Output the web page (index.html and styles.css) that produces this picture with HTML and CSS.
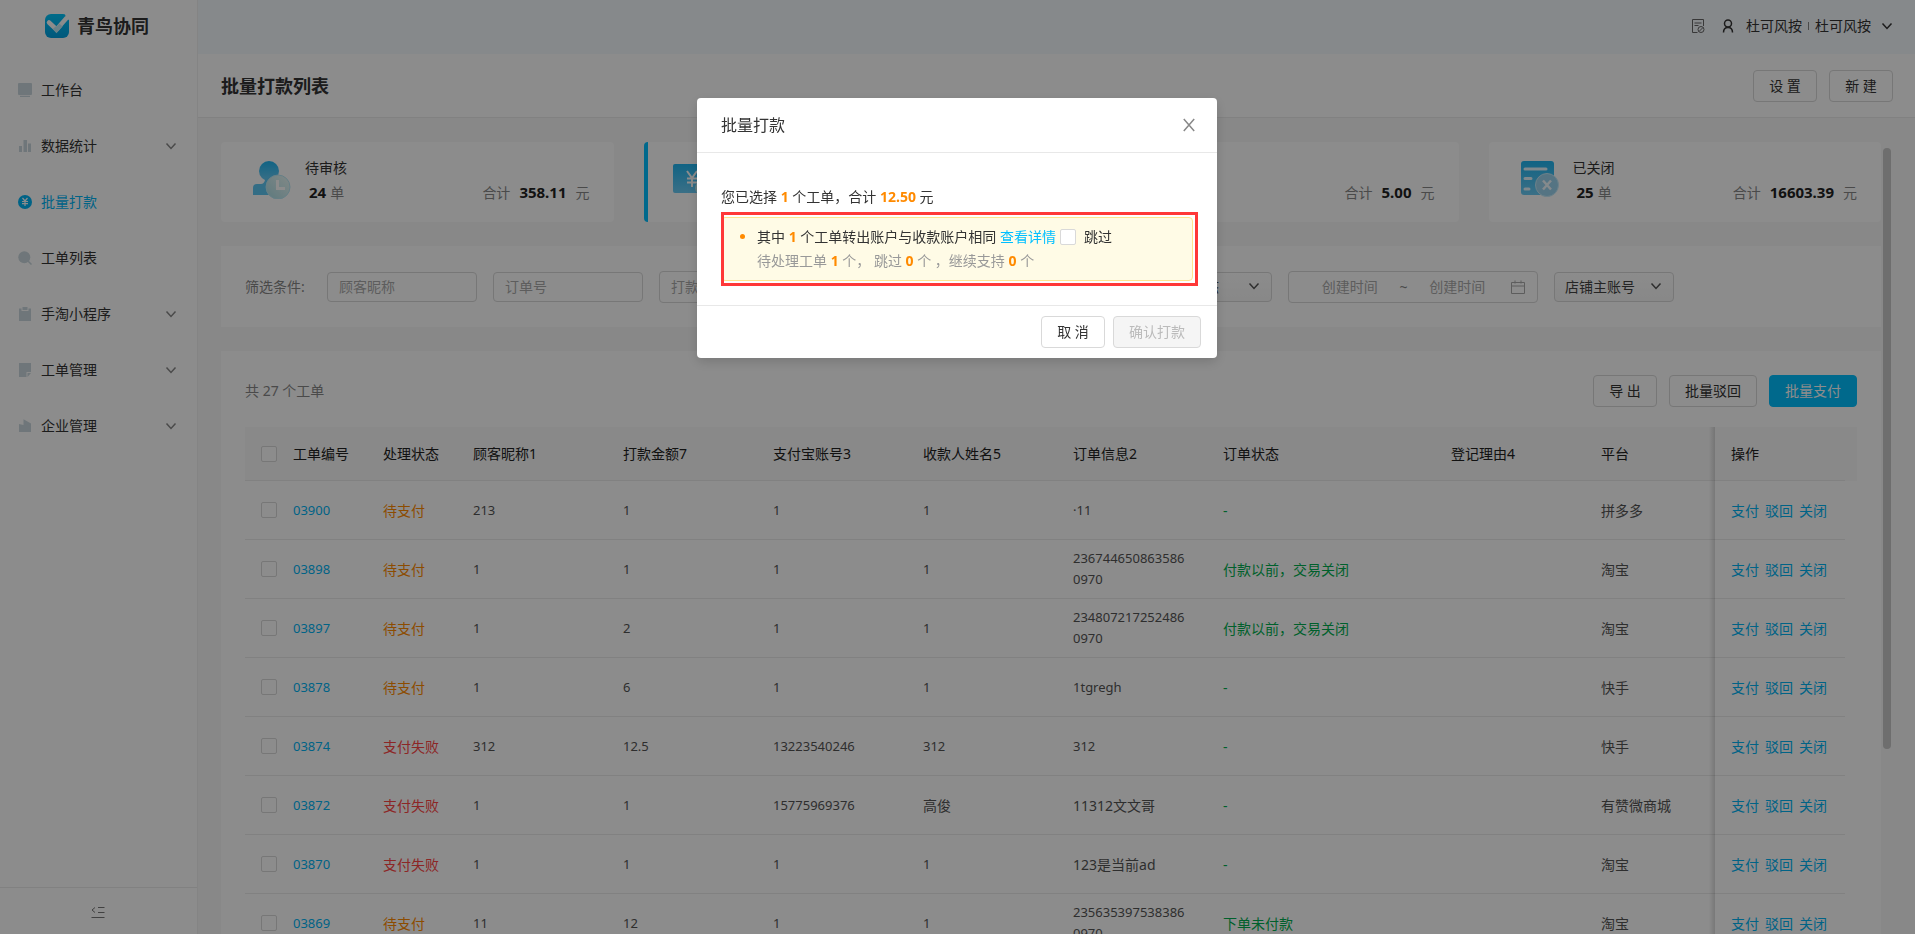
FILE: index.html
```html
<!DOCTYPE html>
<html lang="zh-CN">
<head>
<meta charset="utf-8">
<title>批量打款列表</title>
<link rel="stylesheet" href="styles.css">
</head>
<body>
<svg class="defs" aria-hidden="true">
  <defs>
    <linearGradient id="blue" x1="0" y1="0" x2="0" y2="1"><stop offset="0" stop-color="#1fb5f0"/><stop offset="1" stop-color="#6bcbf5"/></linearGradient>
    <linearGradient id="pale" x1="1" y1="0" x2="0" y2="1"><stop offset="0" stop-color="#eefaf6"/><stop offset="1" stop-color="#aadde6"/></linearGradient>
    <linearGradient id="brand" x1="0" y1="0" x2="0" y2="1"><stop offset="0" stop-color="#00c4fa"/><stop offset="1" stop-color="#00a0e0"/></linearGradient>
    <symbol id="chev" viewBox="0 0 12 12"><path d="M1.500 3.500 6 8.500l4.500-5" fill="none" stroke="currentColor" stroke-width="1.500"/></symbol>
  </defs>
</svg>
<div class="app">
  <aside class="sidebar">
    <div class="logo">
      <svg width="24" height="24" viewBox="0 0 24 24"><rect width="24" height="24" rx="6" fill="url(#brand)"/><path d="M20 0h4v6l-3-2z" fill="#fff"/><path d="M4 8.500 11.500 15.500" fill="none" stroke="#fff" stroke-width="4.500" stroke-linecap="round"/><path d="M11.500 15.500 22 3.500" fill="none" stroke="#fff" stroke-width="4.500"/><path d="M9.500 13.500 11.500 15.800 16 11" fill="none" stroke="#c2ecf7" stroke-width="4.500"/></svg>
      <span>青鸟协同</span>
    </div>
    <nav class="menu">
      <a href="#"><svg class="mi" viewBox="0 0 14 14"><path d="M1 0h12a1 1 0 0 1 1 1v10a1 1 0 0 1-1 1H1a1 1 0 0 1-1-1V1a1 1 0 0 1 1-1zM2 12.800h10V14H2z"/></svg><span>工作台</span></a>
      <a href="#"><svg class="mi" viewBox="0 0 14 14"><path d="M1 7h3v6H1zM5.500 1h3.500v12H5.500zM10 4.500h3V13h-3z"/></svg><span>数据统计</span><svg class="chev"><use href="#chev"/></svg></a>
      <a href="#" class="on"><svg class="mi" viewBox="0 0 14 14"><circle cx="7" cy="7" r="7"/><path d="M4.500 3 7 6l2.500-3M7 6v5M4 6.500h6M4 8.700h6" fill="none" stroke="#fff" stroke-width="1.200"/></svg><span>批量打款</span></a>
      <a href="#"><svg class="mi" viewBox="0 0 14 14"><circle cx="6.300" cy="6.300" r="6"/><path d="m10 10 3.500 3.500" stroke="#cad8de" stroke-width="1.500"/></svg><span>工单列表</span></a>
      <a href="#"><svg class="mi" viewBox="0 0 14 14"><path d="M1 1.500h2.500V4h7V1.500H13V14H1zM4.500 0h5v3h-5z"/></svg><span>手淘小程序</span><svg class="chev"><use href="#chev"/></svg></a>
      <a href="#"><svg class="mi" viewBox="0 0 14 14"><path d="M1 0h12v9H8.500v5H1zM9.500 10H13l-3.500 4z"/></svg><span>工单管理</span><svg class="chev"><use href="#chev"/></svg></a>
      <a href="#"><svg class="mi" viewBox="0 0 14 14"><path d="M1 5l4.500 1V.2L13 4.500V13H1z"/></svg><span>企业管理</span><svg class="chev"><use href="#chev"/></svg></a>
    </nav>
    <button class="fold" aria-label="收起菜单"><svg width="14" height="14" viewBox="0 0 14 14" fill="none" stroke="currentColor"><path d="M7 2.500h6.500M7 7.500h6.500M.5 12.500h13M4 2.500 1 5l3 2.500"/></svg></button>
  </aside>

  <div class="main">
    <header class="topbar">
      <svg class="doc" width="14" height="14" viewBox="0 0 14 14" fill="none" stroke="currentColor"><path d="M6.500 13.500h-5v-13h11V7M3.500 4h7M3.500 6.500h4"/><circle cx="10" cy="10.500" r="3"/><path d="m8 12.500 4-4"/></svg>
      <svg class="user" width="12" height="14" viewBox="0 0 12 14" fill="none" stroke="currentColor" stroke-width="1.500"><circle cx="6" cy="4.500" r="3.500"/><path d="M1.500 13.500c0-3 1.500-5 4.500-5s4.500 2 4.500 5"/></svg>
      <span class="who">杜可风按</span><i class="bar"></i><span>杜可风按</span><svg class="chev"><use href="#chev"/></svg>
    </header>
    <div class="titlebar">
      <h1>批量打款列表</h1>
      <button class="btn">设 置</button>
      <button class="btn">新 建</button>
    </div>

    <div class="content">
      <section class="cards">
        <div class="card">
          <svg width="38" height="38" viewBox="0 0 38 38"><circle cx="16" cy="10" r="10" fill="url(#blue)"/><path d="M12 17h8v6h10v11H0V27q0-4 4-4h4q3 0 4-4z" fill="#5ec6f3"/><circle cx="25" cy="26" r="12" fill="url(#pale)" stroke="#b9e8f5"/><path d="M24.500 19v8.500H32" fill="none" stroke="#fff" stroke-width="3"/></svg>
          <div class="info"><div>待审核</div><div class="nums"><strong>24</strong><span>单</span></div></div>
          <div class="sum"><span>合计</span><strong>358.11</strong><span>元</span></div>
        </div>
        <div class="card sel">
          <svg width="38" height="38" viewBox="0 0 38 38"><rect y="3" width="38" height="29" rx="2" fill="url(#blue)"/><path d="m14 10 5 7 5-7M19 17v9M14 17.500h10M14 21.500h10" fill="none" stroke="#fff" stroke-width="2"/><circle cx="29" cy="27" r="7" fill="url(#pale)"/></svg>
        </div>
        <div class="card">
          <div class="sum"><span>合计</span><strong>5.00</strong><span>元</span></div>
        </div>
        <div class="card">
          <svg width="38" height="38" viewBox="0 0 38 38"><rect width="33" height="34" rx="3" fill="url(#blue)"/><path d="M4 8h21M4 17.500h6M4 28h4" stroke="#e8f8ff" stroke-width="3" stroke-linecap="round"/><circle cx="26" cy="24" r="11.500" fill="#9bd3ee" stroke="#c6ebfa"/><path d="m22 19.500 8 9m0-9-8 9" stroke="#f2fbff" stroke-width="2.500"/></svg>
          <div class="info"><div>已关闭</div><div class="nums"><strong>25</strong><span>单</span></div></div>
          <div class="sum"><span>合计</span><strong>16603.39</strong><span>元</span></div>
        </div>
      </section>

      <section class="filters">
        <span class="flabel">筛选条件:</span>
        <input class="field" type="text" placeholder="顾客昵称" aria-label="顾客昵称">
        <input class="field" type="text" placeholder="订单号" aria-label="订单号">
        <input class="field wide" type="text" placeholder="打款金额" aria-label="打款金额">
        <span class="pick"><select aria-label="订单状态"><option>订单状态</option></select><svg class="chev"><use href="#chev"/></svg></span>
        <span class="range"><input type="text" placeholder="创建时间" aria-label="开始时间"><span>~</span><input type="text" placeholder="创建时间" aria-label="结束时间"><svg width="14" height="14" viewBox="0 0 14 14" fill="none" stroke="currentColor"><path d="M.5 2.500h13v11H.5zM.5 6h13M4 .5v3M10 .5v3"/></svg></span>
        <span class="pick"><select aria-label="店铺主账号"><option>店铺主账号</option></select><svg class="chev"><use href="#chev"/></svg></span>
      </section>

      <section class="list">
        <div class="tools">
          <span>共 27 个工单</span>
          <button class="btn">导 出</button>
          <button class="btn">批量驳回</button>
          <button class="btn primary">批量支付</button>
        </div>
        <table>
          <colgroup><col class="c32"><col class="c90"><col class="c90"><col class="c150"><col class="c150"><col class="c150"><col class="c150"><col class="c150"><col><col class="c150"><col class="c130"><col class="c130"></colgroup>
          <thead><tr><th class="ck"><input type="checkbox" aria-label="全选"></th><th>工单编号</th><th>处理状态</th><th>顾客昵称1</th><th>打款金额7</th><th>支付宝账号3</th><th>收款人姓名5</th><th>订单信息2</th><th>订单状态</th><th>登记理由4</th><th>平台</th><th class="ops">操作</th></tr></thead>
          <tbody>
            <tr><td class="ck"><input type="checkbox" aria-label="选择03900"></td><td class="num"><a href="#">03900</a></td><td class="wait">待支付</td><td class="num">213</td><td class="num">1</td><td class="num">1</td><td class="num">1</td><td class="num">·11</td><td class="ok">-</td><td></td><td>拼多多</td><td class="ops"><a href="#">支付</a><a href="#">驳回</a><a href="#">关闭</a></td></tr>
            <tr><td class="ck"><input type="checkbox" aria-label="选择03898"></td><td class="num"><a href="#">03898</a></td><td class="wait">待支付</td><td class="num">1</td><td class="num">1</td><td class="num">1</td><td class="num">1</td><td class="num">2367446508635860970</td><td class="ok">付款以前，交易关闭</td><td></td><td>淘宝</td><td class="ops"><a href="#">支付</a><a href="#">驳回</a><a href="#">关闭</a></td></tr>
            <tr><td class="ck"><input type="checkbox" aria-label="选择03897"></td><td class="num"><a href="#">03897</a></td><td class="wait">待支付</td><td class="num">1</td><td class="num">2</td><td class="num">1</td><td class="num">1</td><td class="num">2348072172524860970</td><td class="ok">付款以前，交易关闭</td><td></td><td>淘宝</td><td class="ops"><a href="#">支付</a><a href="#">驳回</a><a href="#">关闭</a></td></tr>
            <tr><td class="ck"><input type="checkbox" aria-label="选择03878"></td><td class="num"><a href="#">03878</a></td><td class="wait">待支付</td><td class="num">1</td><td class="num">6</td><td class="num">1</td><td class="num">1</td><td class="num">1tgregh</td><td class="ok">-</td><td></td><td>快手</td><td class="ops"><a href="#">支付</a><a href="#">驳回</a><a href="#">关闭</a></td></tr>
            <tr><td class="ck"><input type="checkbox" aria-label="选择03874"></td><td class="num"><a href="#">03874</a></td><td class="fail">支付失败</td><td class="num">312</td><td class="num">12.5</td><td class="num">13223540246</td><td class="num">312</td><td class="num">312</td><td class="ok">-</td><td></td><td>快手</td><td class="ops"><a href="#">支付</a><a href="#">驳回</a><a href="#">关闭</a></td></tr>
            <tr><td class="ck"><input type="checkbox" aria-label="选择03872"></td><td class="num"><a href="#">03872</a></td><td class="fail">支付失败</td><td class="num">1</td><td class="num">1</td><td class="num">15775969376</td><td>高俊</td><td>11312文文哥</td><td class="ok">-</td><td></td><td>有赞微商城</td><td class="ops"><a href="#">支付</a><a href="#">驳回</a><a href="#">关闭</a></td></tr>
            <tr><td class="ck"><input type="checkbox" aria-label="选择03870"></td><td class="num"><a href="#">03870</a></td><td class="fail">支付失败</td><td class="num">1</td><td class="num">1</td><td class="num">1</td><td class="num">1</td><td>123是当前ad</td><td class="ok">-</td><td></td><td>淘宝</td><td class="ops"><a href="#">支付</a><a href="#">驳回</a><a href="#">关闭</a></td></tr>
            <tr><td class="ck"><input type="checkbox" aria-label="选择03869"></td><td class="num"><a href="#">03869</a></td><td class="wait">待支付</td><td class="num">11</td><td class="num">12</td><td class="num">1</td><td class="num">1</td><td class="num">2356353975383860970</td><td class="ok">下单未付款</td><td></td><td>淘宝</td><td class="ops"><a href="#">支付</a><a href="#">驳回</a><a href="#">关闭</a></td></tr>
          </tbody>
        </table>
      </section>
      <div class="thumb"></div>
    </div>
  </div>
</div>

<div class="mask">
  <div class="modal" role="dialog" aria-labelledby="mt">
    <div class="mhead"><h2 id="mt">批量打款</h2><button class="close" aria-label="关闭"><svg width="12" height="14" viewBox="0 0 12 14" fill="none" stroke="currentColor" stroke-width="1.500"><path d="m.8 1 10.400 12M11.200 1 .8 13"/></svg></button></div>
    <div class="mbody">
      <p>您已选择 <b>1</b> 个工单，合计 <b>12.50</b> 元</p>
      <ul class="alert">
        <li>其中 <b>1</b> 个工单转出账户与收款账户相同 <a href="#">查看详情</a><label><input type="checkbox">跳过</label>
          <div class="sub">待处理工单 <b>1</b> 个， 跳过 <b>0</b> 个 ，继续支持 <b>0</b> 个</div></li>
      </ul>
    </div>
    <div class="mfoot"><button class="btn">取 消</button><button class="btn" disabled>确认打款</button></div>
  </div>
</div>
</body>
</html>
```

FILE: styles.css
```css
* { box-sizing: border-box; }
body {
  margin: 0;
  overflow: hidden;
  font: 14px/22px "Noto Sans", "Noto Sans CJK SC", sans-serif;
  color: #333;
  background: #f7f7f7;
}
input, button, select { font: inherit; color: inherit; }
a { color: #00b4f5; text-decoration: none; }
h1, h2, p, ul { margin: 0; padding: 0; }
.defs { position: absolute; width: 0; height: 0; }
.chev { width: 12px; height: 12px; flex: none; }

.app { display: flex; height: 100vh; }
.sidebar {
  width: 198px;
  flex: none;
  display: flex;
  flex-direction: column;
  background: #fff;
  border-right: 1px solid #f0f0f0;
}
.logo {
  display: flex;
  align-items: center;
  gap: 8px;
  height: 54px;
  padding: 0 0 2px 45px;
  font-size: 18px;
  font-weight: 700;
}
.menu { flex: 1; padding-top: 8px; }
.menu a {
  display: flex;
  align-items: center;
  gap: 9px;
  height: 56px;
  padding: 0 20px 0 18px;
  color: #333;
}
.menu a span { flex: 1; }
.menu .mi { width: 14px; height: 14px; fill: #cad8de; }
.menu .chev { color: #888; }
.menu .on { color: #00b4f5; }
.menu .on .mi { fill: #00b4f5; }
.fold {
  height: 47px;
  padding: 0 2px 0 0;
  border: 0;
  border-top: 1px solid #ebebeb;
  background: none;
  color: #777;
}
.fold svg { vertical-align: middle; }

.main { flex: 1; min-width: 0; display: flex; flex-direction: column; }
.topbar {
  display: flex;
  align-items: center;
  justify-content: flex-end;
  height: 54px;
  flex: none;
  padding: 0 22px 2px;
  background: #f5f9fd;
}
.topbar .doc { color: #666; }
.topbar .user { margin: 0 12px 0 17px; }
.topbar .bar { width: 1px; height: 8px; margin: 0 6px; background: #888; }
.topbar .chev { margin-left: 10px; }
.titlebar {
  display: flex;
  align-items: center;
  gap: 12px;
  height: 64px;
  flex: none;
  padding: 0 22px 0 23px;
  background: #fff;
  border-bottom: 1px solid #ebebeb;
}
.titlebar h1 { flex: 1; font-size: 18px; }
.btn {
  height: 32px;
  padding: 0 15px;
  border: 1px solid #d9d9d9;
  border-radius: 4px;
  background: #fff;
  line-height: 22px;
  min-width: 64px;
}
.btn.primary { background: #00bfff; border-color: #00bfff; color: #fff; }
.btn:disabled { background: #f5f5f5; color: #bbb; }

.content {
  flex: 1;
  min-height: 0;
  overflow: hidden;
  position: relative;
  display: flex;
  flex-direction: column;
  gap: 24px;
  padding: 24px 34px 0 23px;
}
.thumb {
  position: absolute;
  top: 30px;
  right: 24px;
  width: 8px;
  height: 601px;
  border-radius: 4px;
  background: #c8c8c8;
}
.cards { display: grid; grid-template-columns: repeat(4, 1fr); gap: 30px; }
.card {
  display: flex;
  align-items: center;
  height: 80px;
  padding: 0 24px 4px 32px;
  border-radius: 4px;
  background: #fff;
}
.card.sel { border-left: 4px solid #00bfff; padding-left: 25px; }
.info { margin-left: 14px; line-height: 24px; }
.nums { padding-left: 4px; }
.nums span, .sum { color: #888; }
.nums span { margin-left: 4px; }
.sum { margin-left: auto; padding-top: 24px; line-height: 24px; }
.sum strong { margin: 0 9px; }
.card strong { font-size: 15px; color: #222; }

.filters {
  display: flex;
  align-items: center;
  gap: 16px;
  height: 81px;
  flex: none;
  padding: 0 24px;
  background: #fff;
}
.flabel { width: 66px; color: #888; }
.field, .pick select, .range {
  border: 1px solid #d9d9d9;
  border-radius: 4px;
  background: #fff;
}
.field { width: 150px; height: 30px; padding: 0 11px; }
.field.wide { width: 477px; height: 32px; }
::placeholder { color: #aaa; opacity: 1; }
.pick { position: relative; display: flex; }
.pick select {
  appearance: none;
  width: 120px;
  height: 30px;
  padding: 0 10px;
  color: #444;
  background: linear-gradient(#fff, #f7f7f7);
}
.pick .chev { position: absolute; right: 12px; top: 8px; color: #555; pointer-events: none; }
.range {
  display: flex;
  align-items: center;
  width: 250px;
  height: 32px;
  padding: 0 12px 0 11px;
  color: #888;
}
.range input {
  flex: 1;
  min-width: 0;
  padding: 0;
  border: 0;
  text-align: center;
  background: none;
}
.range svg { margin-left: 4px; color: #aaa; }

.list { flex: 1; padding: 24px 24px 0; background: #fff; }
.tools { display: flex; gap: 12px; align-items: center; margin-bottom: 20px; color: #888; }
.tools span { flex: 1; }
.tools .btn { color: #333; }
.tools .btn.primary { color: #fff; }
table {
  width: calc(100% - 12px);
  table-layout: fixed;
  border-collapse: separate;
  border-spacing: 0;
  line-height: 21px;
  color: #555;
}
.c32 { width: 32px; }
.c90 { width: 90px; }
.c130 { width: 130px; }
.c150 { width: 150px; }
th, td {
  padding: 0 16px;
  border-bottom: 1px solid #ebebeb;
  text-align: left;
  word-break: break-all;
}
th { height: 54px; background: #f9f9f9; font-weight: 400; color: #222; }
td { height: 59px; }
.ck { padding-right: 0; }
.num { font-size: 13px; }
.wait { color: #ff8a00; }
.fail { color: #ff4646; }
.ok { color: #00b050; }
.ops { position: relative; white-space: nowrap; }
.ops::before {
  content: "";
  position: absolute;
  top: 0;
  bottom: -1px;
  left: -6px;
  width: 6px;
  background: linear-gradient(to left, rgba(0, 0, 0, .14), transparent);
}
th.ops { box-shadow: 12px 0 #f9f9f9; }
td.ops a + a { margin-left: 6px; }
input[type="checkbox"] {
  appearance: none;
  display: block;
  width: 16px;
  height: 16px;
  margin: 0;
  border: 1px solid #d9d9d9;
  border-radius: 2px;
  background: #fff;
}

.mask {
  position: fixed;
  inset: 0;
  padding: 98px 1px 0 0;
  background: rgba(0, 0, 0, .45);
}
.modal {
  width: 520px;
  margin: 0 auto;
  border-radius: 4px;
  background: #fff;
  box-shadow: 0 4px 12px rgba(0, 0, 0, .15);
}
.mhead {
  display: flex;
  align-items: center;
  justify-content: space-between;
  height: 55px;
  padding: 0 22px 0 24px;
  border-bottom: 1px solid #e8e8e8;
}
.mhead h2 { font-size: 16px; font-weight: 400; }
.close { display: flex; padding: 0; border: 0; background: none; color: #888; }
.mbody { padding: 33px 24px 24px; }
.mbody p { margin-bottom: 9px; }
.mbody b { color: #ff8a00; }
.alert {
  position: relative;
  padding: 7px 15px 7px 35px;
  border: 1px solid #ffe58f;
  border-radius: 4px;
  background: #fffbe6;
  line-height: 24px;
}
.alert::after {
  content: "";
  position: absolute;
  inset: -6px -6px -6px -1px;
  border: 3px solid #ff3838;
  pointer-events: none;
}
.alert li::marker { color: #ff8a00; }
.alert a { color: #00bfff; }
.alert label { display: inline-flex; align-items: center; gap: 8px; margin-left: 4px; vertical-align: top; }
.sub { color: #999; }
.mfoot {
  display: flex;
  justify-content: flex-end;
  gap: 8px;
  padding: 10px 16px;
  border-top: 1px solid #e8e8e8;
}
```
